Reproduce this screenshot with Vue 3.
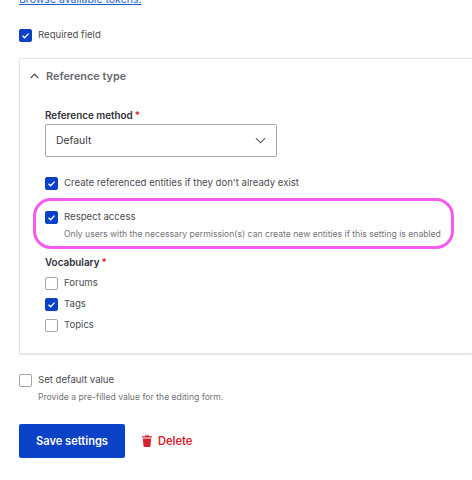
<script setup>
import { ref } from 'vue'

const vocabularies = ref([
  { name: 'Forums', checked: false },
  { name: 'Tags', checked: true },
  { name: 'Topics', checked: false }
])
</script>

<template>
  <div class="page">
    <a class="token-link" href="#">Browse available tokens.</a>

    <div class="check-row required-row">
      <span class="box checked">
        <svg viewBox="0 0 14 14"><path d="M3.2 7.3l2.700 2.600 5-5.300" /></svg>
      </span>
      <span>Required field</span>
    </div>

    <section class="panel">
      <div class="panel-title">
        <svg class="chevron" viewBox="0 0 10 6"><path d="M.8 5.200L5 1l4.200 4.200" /></svg>
        <span>Reference type</span>
      </div>

      <div class="panel-body">
        <div class="field-label method-label">Reference method<span class="star">*</span></div>
        <div class="select">
          <span>Default</span>
          <svg viewBox="0 0 12 7"><path d="M1 1l5 5 5-5" /></svg>
        </div>

        <div class="check-row create-row">
          <span class="box checked">
            <svg viewBox="0 0 14 14"><path d="M3.2 7.3l2.700 2.600 5-5.300" /></svg>
          </span>
          <span>Create referenced entities if they don't already exist</span>
        </div>

        <div class="highlight">
          <div class="check-row">
            <span class="box checked">
              <svg viewBox="0 0 14 14"><path d="M3.2 7.3l2.700 2.600 5-5.300" /></svg>
            </span>
            <span>Respect access</span>
          </div>
          <div class="hint">Only users with the necessary permission(s) can create new entities if this setting is enabled</div>
        </div>

        <div class="field-label vocab-label">Vocabulary<span class="star">*</span></div>
        <div class="vocab-list">
          <div v-for="item in vocabularies" :key="item.name" class="check-row">
            <span class="box" :class="{ checked: item.checked }">
              <svg v-if="item.checked" viewBox="0 0 14 14"><path d="M3.2 7.3l2.700 2.600 5-5.300" /></svg>
            </span>
            <span>{{ item.name }}</span>
          </div>
        </div>
      </div>
    </section>

    <div class="check-row default-row">
      <span class="box"></span>
      <span>Set default value</span>
    </div>
    <div class="hint default-hint">Provide a pre-filled value for the editing form.</div>

    <div class="actions">
      <button class="save-button">Save settings</button>
      <a class="delete-link" href="#">
        <svg viewBox="0 0 10 12"><path d="M3.400.3h3.200l.5 1H10v1.300H0V1.300h2.900zM.8 3.400h8.400L8.500 11a1 1 0 0 1-1 .9h-5a1 1 0 0 1-1-.9z" /></svg>
        <span>Delete</span>
      </a>
    </div>
  </div>
</template>

<style scoped>
.page {
  height: 480px;
  overflow: hidden;
  padding-left: 19px;
  box-sizing: border-box;
  font-family: Inter, "Liberation Sans", sans-serif;
  font-size: 9.6px;
  color: #4b4b52;
}

.token-link {
  display: block;
  margin-top: -7px;
  height: 14px;
  line-height: 14px;
  font-size: 10.500px;
  color: #1d5fd0;
  text-decoration: underline;
}

.check-row {
  display: flex;
  align-items: center;
  gap: 6px;
  height: 14px;
  line-height: 14px;
}

.box {
  flex: none;
  width: 13px;
  height: 13px;
  box-sizing: border-box;
  border: 1px solid #a4a4aa;
  border-radius: 2px;
  background: #fff;
}

.box.checked {
  border-color: #0a42c7;
  background: #0a42c7;
}

.box svg {
  display: block;
  width: 11px;
  height: 11px;
  fill: none;
  stroke: #fff;
  stroke-width: 1.8;
}

.required-row {
  margin-top: 21px;
}

.panel {
  margin-top: 16px;
  height: 296px;
  box-sizing: border-box;
  border: 1px solid #e4e4e8;
  border-right: none;
  border-radius: 2px 0 0 2px;
  box-shadow: 0 1px 2px rgba(0, 0, 0, 0.1);
}

.panel-title {
  display: flex;
  align-items: center;
  gap: 7px;
  margin-top: 9px;
  padding-left: 10px;
  height: 16px;
  font-size: 10.900px;
  font-weight: 600;
  color: #6a6a72;
}

.chevron {
  width: 9px;
  height: 6px;
  fill: none;
  stroke: #55555c;
  stroke-width: 1.4;
}

.panel-body {
  padding-left: 25px;
}

.field-label {
  height: 14px;
  line-height: 14px;
  font-size: 9.900px;
  font-weight: 600;
  color: #303036;
}

.star {
  margin-left: 2px;
  color: #d8242f;
}

.method-label {
  margin-top: 24px;
}

.select {
  display: flex;
  align-items: center;
  justify-content: space-between;
  box-sizing: border-box;
  width: 232px;
  height: 33px;
  margin-top: 2px;
  padding: 0 10px 0 10px;
  border: 1px solid #a8a8ae;
  border-radius: 2px;
  font-size: 10.400px;
  color: #3c3c42;
}

.select svg {
  width: 11px;
  height: 7px;
  fill: none;
  stroke: #55555c;
  stroke-width: 1.2;
}

.create-row {
  margin-top: 19px;
}

.highlight {
  box-sizing: border-box;
  width: 421px;
  height: 51px;
  margin: 8px 0 0 -12px;
  padding: 9px 0 0 9px;
  border: 3px solid #f45cf0;
  border-radius: 18px;
}

.hint {
  font-size: 8.650px;
  line-height: 12px;
  color: #73737a;
}

.highlight .hint {
  margin-top: 4px;
  padding-left: 19px;
  white-space: nowrap;
}

.vocab-label {
  margin-top: 6px;
}

.vocab-list {
  display: flex;
  flex-direction: column;
  gap: 7px;
  margin-top: 7px;
}

.default-row {
  margin-top: 19px;
}

.default-hint {
  margin-top: 4px;
  padding-left: 19px;
}

.actions {
  display: flex;
  align-items: center;
  gap: 17px;
  margin-top: 21px;
}

.save-button {
  width: 106px;
  height: 34px;
  border: none;
  border-radius: 2px;
  background: #0a42c7;
  color: #fff;
  font-family: inherit;
  font-size: 11.100px;
  font-weight: 600;
  cursor: pointer;
}

.delete-link {
  display: flex;
  align-items: center;
  gap: 6px;
  font-size: 11.100px;
  font-weight: 600;
  color: #d5232d;
  text-decoration: none;
}

.delete-link svg {
  width: 10px;
  height: 12px;
  fill: #d5232d;
}
</style>
